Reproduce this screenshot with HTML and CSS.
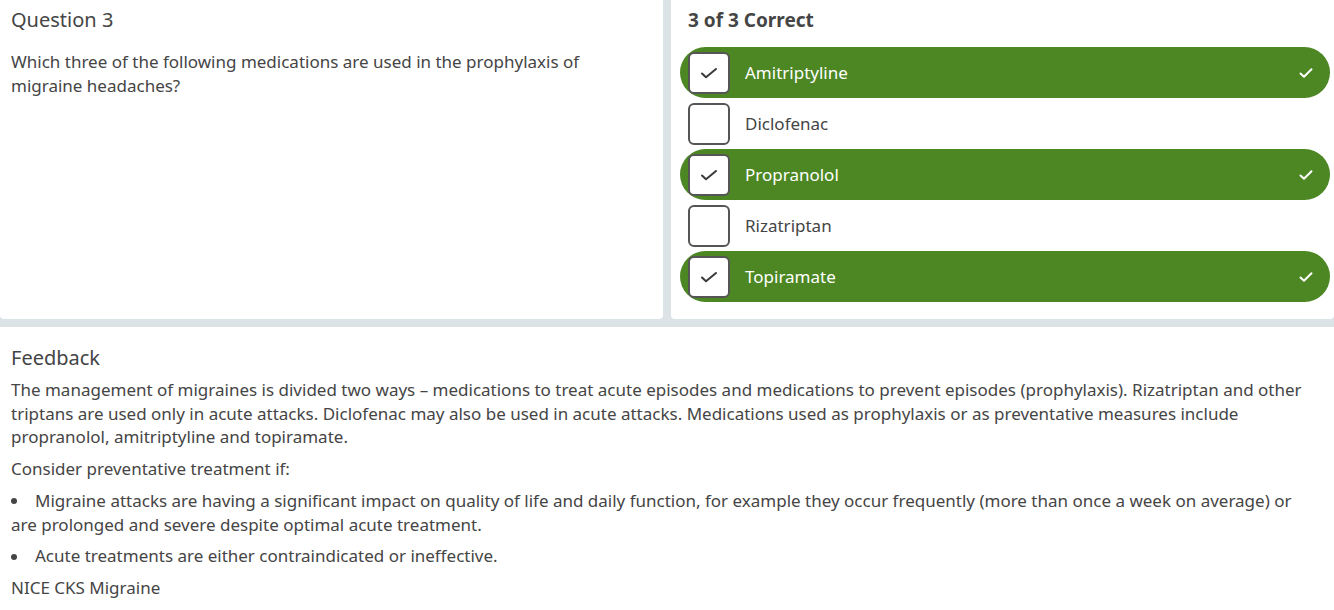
FILE: index.html
```html
<!DOCTYPE html>
<html>
<head>
<meta charset="utf-8">
<link rel="stylesheet" href="styles.css">
</head>
<body>
<div class="top">
  <section class="panel question">
    <h2 class="q-title">Question 3</h2>
    <p class="q-text">Which three of the following medications are used in the prophylaxis of migraine headaches?</p>
  </section>
  <section class="panel answers">
    <h2 class="score">3 of 3 Correct</h2>
    <ul class="options">
      <li class="option correct">
        <span class="box"><svg viewBox="0 0 20 20" width="20" height="20"><path d="M3 10.5l4 3.8L17 6" fill="none" stroke="#3a3a3a" stroke-width="2" stroke-linecap="round" stroke-linejoin="round"/></svg></span>
        <span class="label">Amitriptyline</span>
        <svg class="tick" viewBox="0 0 16 16" width="16" height="16"><path d="M2.5 8.5l3.5 3.3L13.5 4.3" fill="none" stroke="#fff" stroke-width="2" stroke-linecap="round" stroke-linejoin="round"/></svg>
      </li>
      <li class="option">
        <span class="box"></span>
        <span class="label">Diclofenac</span>
      </li>
      <li class="option correct">
        <span class="box"><svg viewBox="0 0 20 20" width="20" height="20"><path d="M3 10.5l4 3.8L17 6" fill="none" stroke="#3a3a3a" stroke-width="2" stroke-linecap="round" stroke-linejoin="round"/></svg></span>
        <span class="label">Propranolol</span>
        <svg class="tick" viewBox="0 0 16 16" width="16" height="16"><path d="M2.5 8.5l3.5 3.3L13.5 4.3" fill="none" stroke="#fff" stroke-width="2" stroke-linecap="round" stroke-linejoin="round"/></svg>
      </li>
      <li class="option">
        <span class="box"></span>
        <span class="label">Rizatriptan</span>
      </li>
      <li class="option correct">
        <span class="box"><svg viewBox="0 0 20 20" width="20" height="20"><path d="M3 10.5l4 3.8L17 6" fill="none" stroke="#3a3a3a" stroke-width="2" stroke-linecap="round" stroke-linejoin="round"/></svg></span>
        <span class="label">Topiramate</span>
        <svg class="tick" viewBox="0 0 16 16" width="16" height="16"><path d="M2.5 8.5l3.5 3.3L13.5 4.3" fill="none" stroke="#fff" stroke-width="2" stroke-linecap="round" stroke-linejoin="round"/></svg>
      </li>
    </ul>
  </section>
</div>
<section class="feedback">
  <h2 class="fb-title">Feedback</h2>
  <p>The management of migraines is divided two ways – medications to treat acute episodes and medications to prevent episodes (prophylaxis). Rizatriptan and other triptans are used only in acute attacks. Diclofenac may also be used in acute attacks. Medications used as prophylaxis or as preventative measures include propranolol, amitriptyline and topiramate.</p>
  <p>Consider preventative treatment if:</p>
  <p><span class="bullet"></span>Migraine attacks are having a significant impact on quality of life and daily function, for example they occur frequently (more than once a week on average) or are prolonged and severe despite optimal acute treatment.</p>
  <p><span class="bullet"></span>Acute treatments are either contraindicated or ineffective.</p>
  <p>NICE CKS Migraine</p>
</section>
</body>
</html>
```

FILE: styles.css
```css
* { box-sizing: border-box; }
html, body { margin: 0; padding: 0; }
body {
  font-family: "Noto Sans", "Open Sans", sans-serif;
  color: #454545;
  background: #fff;
  font-size: 17px;
}
h2, p, ul { margin: 0; }
.top {
  display: flex;
  gap: 8px;
  background: #dbe3e6;
  padding-bottom: 8px;
}
.panel {
  background: #fff;
  border-radius: 0 0 4px 4px;
  height: 319px;
}
.question {
  width: 663px;
  padding: 8px 11px;
}
.q-title {
  font-weight: 400;
  font-size: 20px;
  line-height: 24px;
}
.q-text {
  margin-top: 18px;
  line-height: 24px;
  width: 600px;
}
.answers {
  flex: 1;
  padding: 8px 4px 0 9px;
}
.score {
  font-size: 19px;
  font-weight: 700;
  line-height: 24px;
  padding-left: 8px;
  color: #454545;
}
.options {
  list-style: none;
  padding: 0;
  margin-top: 15px;
}
.option {
  height: 51px;
  display: flex;
  align-items: center;
  border-radius: 26px;
  padding: 0 16px 0 8px;
}
.option.correct {
  background: #4c8723;
  color: #fff;
}
.box {
  width: 42px;
  height: 42px;
  border: 2px solid #555;
  border-radius: 6px;
  background: #fff;
  display: flex;
  align-items: center;
  justify-content: center;
  flex: none;
}
.label {
  margin-left: 15px;
  flex: 1;
  line-height: 24px;
}
.tick { flex: none; }
.feedback {
  padding: 18px 16px 12px 11px;
}
.fb-title {
  font-weight: 400;
  font-size: 20px;
  line-height: 26px;
  margin-bottom: 7px;
}
.feedback p {
  line-height: 23.7px;
  margin-bottom: 8px;
}
.bullet {
  display: inline-block;
  width: 6px;
  height: 6px;
  border-radius: 50%;
  background: #454545;
  margin-right: 18px;
  vertical-align: middle;
  position: relative;
  top: -1px;
}
```
